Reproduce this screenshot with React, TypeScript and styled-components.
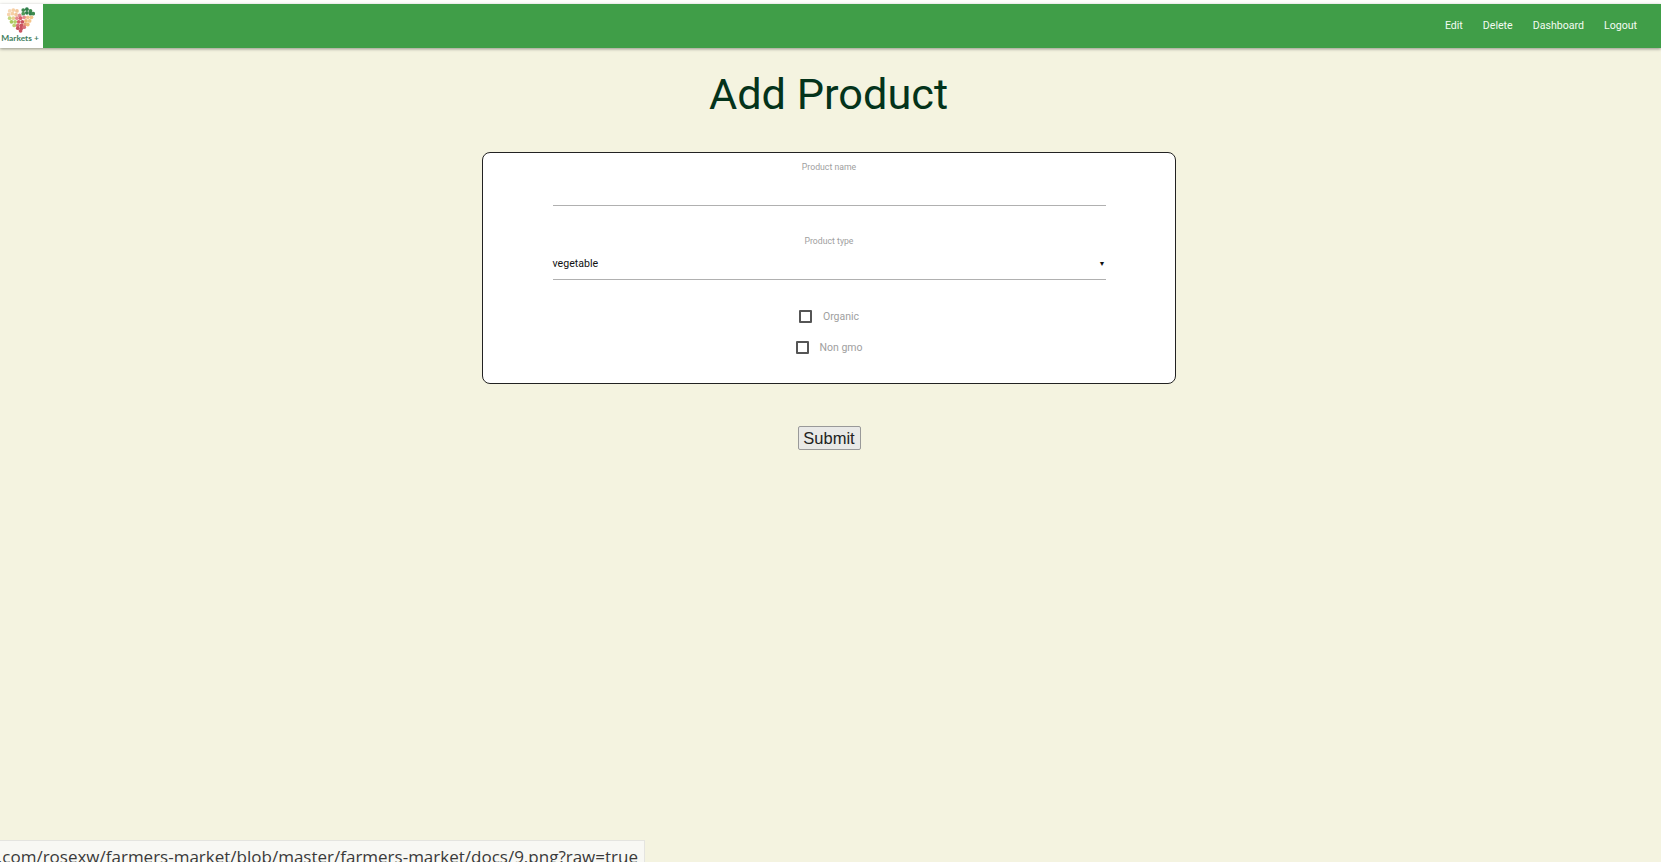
import React from "react";
import styled, { createGlobalStyle } from "styled-components";

const Global = createGlobalStyle`
  html, body { margin: 0; padding: 0; height: 100%; background: #fff; overflow: hidden; }
  #root { height: 100%; }
  * { box-sizing: border-box; }
`;

const Page = styled.div`
  position: relative;
  width: 1661px;
  height: 862px;
  padding-top: 4px;
  background: #fefefb;
  font-family: Roboto, "Liberation Sans", sans-serif;
  overflow: hidden;
`;

const Content = styled.div`
  height: 858px;
  background: #f4f3e0;
  display: flex;
  flex-direction: column;
`;

const NavBar = styled.nav`
  height: 44px;
  flex: none;
  display: flex;
  align-items: stretch;
  justify-content: space-between;
  background: #409e48;
  box-shadow: 0 1px 3px rgba(0, 0, 0, 0.4);
`;

const LogoBox = styled.div`
  width: 43px;
  background: #fff;
  display: flex;
  flex-direction: column;
  align-items: center;
  padding-top: 3px;
`;

const LogoText = styled.span`
  font-family: Lato, Roboto, sans-serif;
  font-size: 8.4px;
  line-height: 9px;
  margin-top: 1px;
  margin-right: 3px;
  color: #3e7d5c;
  white-space: nowrap;
  font-weight: 700;
`;

const NavLinks = styled.div`
  display: flex;
  align-items: center;
  gap: 20px;
  padding-right: 24px;
  padding-bottom: 1px;
`;

const NavLink = styled.a`
  color: #f4fbf2;
  font-size: 10.6px;
  line-height: 14px;
`;

const Main = styled.main`
  width: 1657px;
  display: flex;
  flex-direction: column;
  align-items: center;
`;

const Title = styled.h1`
  margin: 22px 0 0;
  font-size: 43.3px;
  line-height: 50px;
  font-weight: 400;
  color: #04331b;
`;

const Card = styled.form`
  margin-top: 32px;
  width: 694px;
  height: 232px;
  padding: 7px 69px 0 70px;
  background: #fff;
  border: 1px solid #222;
  border-radius: 8px;
  display: flex;
  flex-direction: column;
  align-items: center;
`;

const Field = styled.div`
  width: 100%;
  height: 46px;
  padding-top: 1px;
  display: flex;
  flex-direction: column;
  align-items: center;
  margin-bottom: 28px;
  border-bottom: 1px solid #b0b0b0;
`;

const FieldLabel = styled.label`
  font-size: 8.7px;
  line-height: 12px;
  color: #a0a0a0;
`;

const SelectRow = styled.div`
  width: 100%;
  margin-top: 9px;
  display: flex;
  align-items: center;
  justify-content: space-between;
  font-size: 10.6px;
  line-height: 16px;
  color: #111;
`;

const Arrow = styled.span`
  font-size: 7px;
  line-height: 16px;
  color: #111;
`;

const CheckGroup = styled.div`
  margin-top: -7px;
  display: flex;
  flex-direction: column;
  align-items: center;
`;

const CheckRow = styled.div`
  height: 31px;
  display: flex;
  align-items: center;
  gap: 11px;
  font-size: 10.5px;
  color: #a0a0a0;
`;

const Box = styled.span`
  width: 13px;
  height: 13px;
  border: 2px solid #555;
  border-radius: 1px;
`;

const SubmitButton = styled.button`
  margin: 42px 0 0 1px;
  width: 63px;
  height: 24px;
  padding: 0;
  font-family: "Liberation Sans", Arial, sans-serif;
  font-size: 16.5px;
  color: #222;
  background: #e9e9e7;
  border: 1px solid #999;
  border-radius: 2px;
`;

const StatusBubble = styled.div`
  position: absolute;
  left: 0;
  bottom: 0;
  width: 645px;
  height: 22px;
  padding: 4px 6px 0 0;
  background: #f8f8f4;
  border: 1px solid #e4e4e0;
  border-left: 0;
  border-bottom: 0;
  overflow: hidden;
  white-space: nowrap;
  direction: rtl;
  font-family: "Open Sans", "Noto Sans", sans-serif;
  font-size: 17px;
  line-height: 24px;
  color: #3a3a3a;
`;

const LogoMark = () => {
  const dots = [
    [9, 10, "#f7d9b8"], [13, 9, "#f6cfa4"], [17, 10, "#f3c79b"], [24, 9, "#3f8a4e"], [28, 8, "#2f7f4a"], [32, 10, "#3f8a4e"],
    [8, 14, "#f7d3ae"], [12, 13, "#f6cfa4"], [16, 14, "#f3c79b"], [20, 15, "#e2929a"], [24, 13, "#4f9a58"], [28, 12, "#2f7f4a"], [32, 13, "#2f7f4a"], [35, 13, "#3f8a4e"],
    [9, 18, "#c3d67c"], [13, 18, "#e8d08e"], [17, 18, "#e58a8f"], [21, 18, "#d9606b"], [25, 17, "#e58a8f"], [29, 17, "#f1c08a"], [33, 17, "#f4c48c"],
    [11, 22, "#a8c85c"], [15, 22, "#b6cf6a"], [19, 22, "#d9606b"], [23, 22, "#c9535f"], [27, 21, "#f1b878"], [31, 21, "#f4c48c"],
    [14, 26, "#bccf70"], [18, 26, "#d9707a"], [22, 26, "#c9535f"], [26, 25, "#e39a78"], [29, 25, "#f1b878"],
    [18, 29, "#c9535f"], [22, 29, "#c9535f"], [25, 28, "#d9707a"], [21, 32, "#c9535f"],
  ] as [number, number, string][];
  return (
    <svg width="28" height="26" viewBox="6 6 31 28" aria-hidden="true" style={{ marginRight: 1 }}>
      {dots.map(([x, y, c], i) => (
        <circle key={i} cx={x} cy={y} r="2.1" fill={c} />
      ))}
    </svg>
  );
};

export default function App() {
  return (
    <Page>
      <Global />
      <Content>
        <NavBar>
          <LogoBox>
            <LogoMark />
            <LogoText>Markets +</LogoText>
          </LogoBox>
          <NavLinks>
            <NavLink>Edit</NavLink>
            <NavLink>Delete</NavLink>
            <NavLink>Dashboard</NavLink>
            <NavLink>Logout</NavLink>
          </NavLinks>
        </NavBar>
        <Main>
          <Title>Add Product</Title>
          <Card>
            <Field>
              <FieldLabel>Product name</FieldLabel>
            </Field>
            <Field>
              <FieldLabel>Product type</FieldLabel>
              <SelectRow>
                <span>vegetable</span>
                <Arrow>▼</Arrow>
              </SelectRow>
            </Field>
            <CheckGroup>
              <CheckRow>
                <Box />
                <span>Organic</span>
              </CheckRow>
              <CheckRow>
                <Box />
                <span>Non gmo</span>
              </CheckRow>
            </CheckGroup>
          </Card>
          <SubmitButton type="button">Submit</SubmitButton>
        </Main>
      </Content>
      <StatusBubble>
        <bdi>https://github.com/rosexw/farmers-market/blob/master/farmers-market/docs/9.png?raw=true</bdi>
      </StatusBubble>
    </Page>
  );
}
